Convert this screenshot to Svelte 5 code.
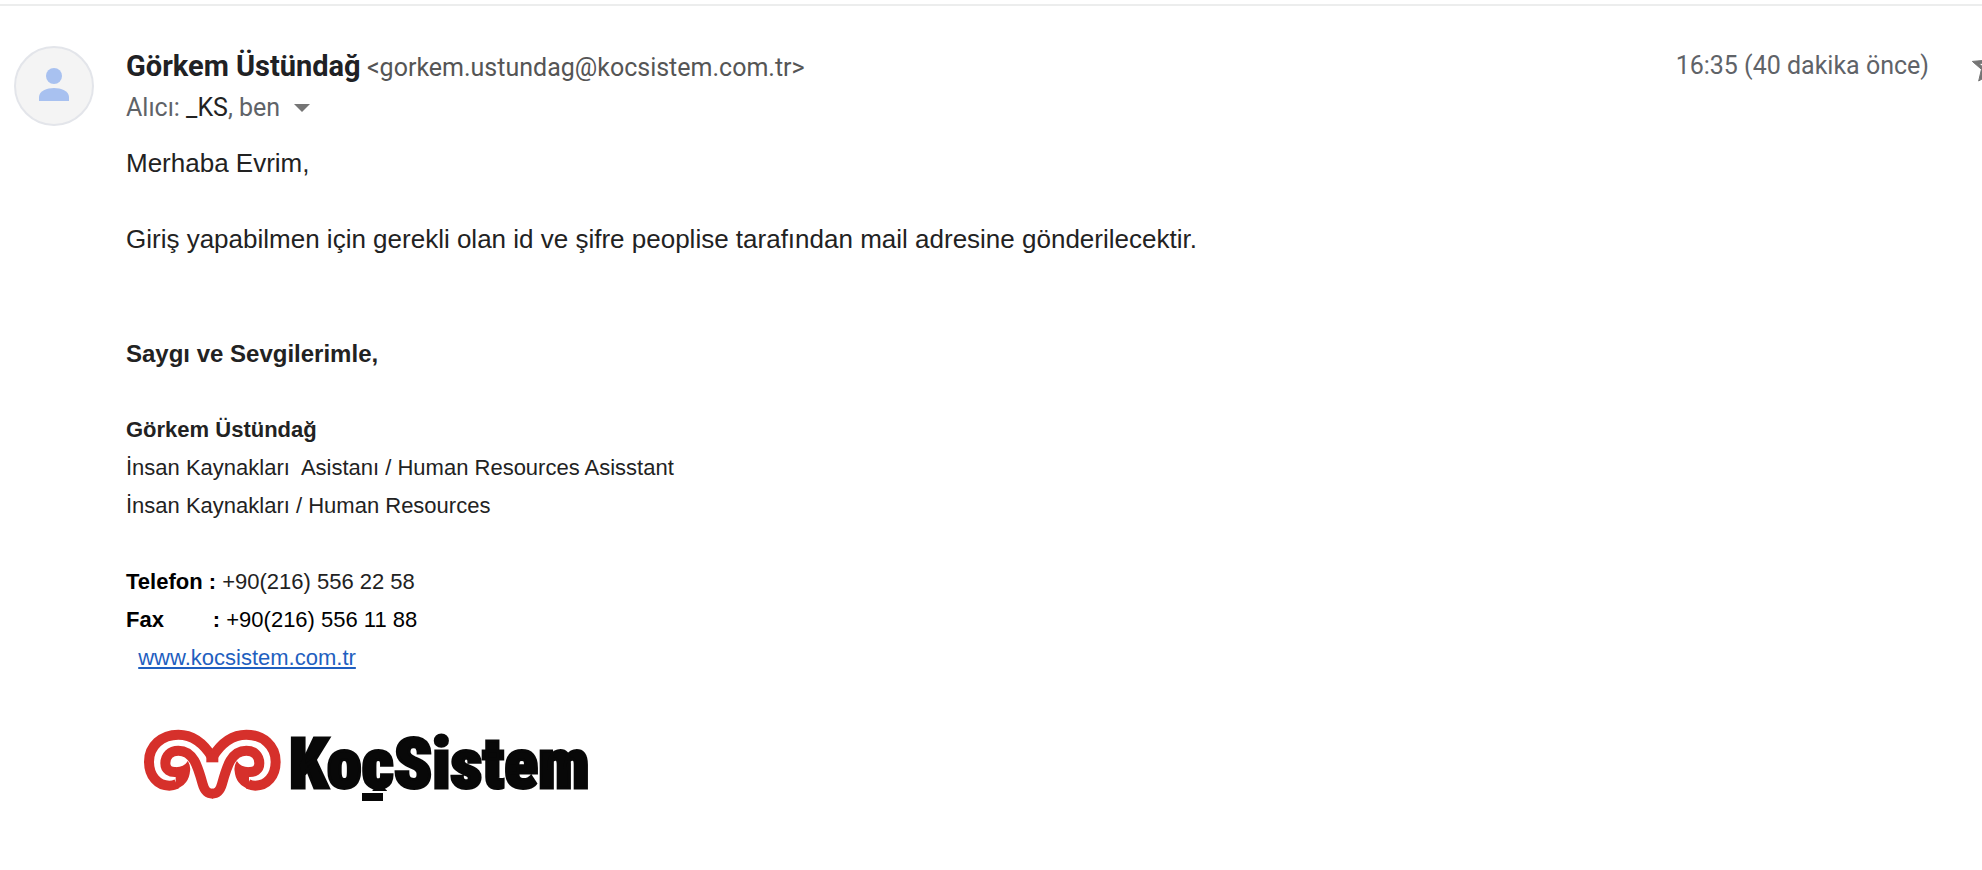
<script>
  const sender = 'Görkem Üstündağ';
  const horn =
    'M232 112C205 68 170 44 130 44C80 44 42 78 42 125C42 168 68 197 103 197Q114 197 125 192M233 221C215 221 208 210 203 192C188 138 175 92 130 92C106 92 91 108 91 130C91 150 106 158 125 156';
  const hook = 'M122 142Q150 140 158 123Q168 137 165 154Q162 194 122 208V174Z';
</script>

<article class="message">
  <header>
    <svg class="avatar" viewBox="0 0 80 80" aria-hidden="true">
      <circle cx="40" cy="40" r="39" fill="#f4f4f4" stroke="#e3e5ea" stroke-width="2" />
      <circle cx="40" cy="30" r="8" fill="#a8c1f0" />
      <path d="M25 55v-4c0-6 8-9 15-9s15 3 15 9v4z" fill="#a8c1f0" />
    </svg>
    <div class="who">
      <div class="from"><strong>{sender}</strong> <span class="email">&lt;gorkem.ustundag@kocsistem.com.tr&gt;</span></div>
      <div class="to">
        <span>Alıcı: <b>_KS</b>, ben</span>
        <button class="details" aria-label="Ayrıntıları göster">
          <svg width="16" height="8" viewBox="0 0 16 8"><path d="M0 0h16L8 8z" fill="#757575" /></svg>
        </button>
      </div>
    </div>
    <time>16:35 (40 dakika önce)</time>
    <button class="star" aria-label="Yıldız ekle">
      <svg width="40" height="40" viewBox="0 0 24 24"><path fill="#757575" stroke="#757575" stroke-width=".6" d="M22 9.24l-7.19-.62L12 2 9.19 8.63 2 9.24l5.46 4.73L5.82 21 12 17.27 18.18 21l-1.63-7.03L22 9.24zM12 15.4l-3.76 2.27 1-4.28-3.32-2.88 4.38-.38L12 6.1l1.71 4.04 4.38.38-3.32 2.88 1 4.28L12 15.4z" /></svg>
    </button>
  </header>

  <div class="body">
    <p>Merhaba Evrim,</p>
    <p class="after-line">Giriş yapabilmen için gerekli olan id ve şifre peoplise tarafından mail adresine gönderilecektir.</p>
    <p class="closing">Saygı ve Sevgilerimle,</p>
    <div class="signature">
      <p><b>{sender}</b></p>
      <p>İnsan Kaynakları&nbsp; Asistanı / Human Resources Asisstant</p>
      <p>İnsan Kaynakları / Human Resources</p>
      <p class="after-line"><b class="dark">Telefon :</b> +90(216) 556 22 58</p>
      <p class="dark"><b>Fax&nbsp;&nbsp;&nbsp;&nbsp;&nbsp;&nbsp;&nbsp; :</b> +90(216) 556 11 88</p>
      <p>&nbsp; <a href="http://www.kocsistem.com.tr">www.kocsistem.com.tr</a></p>
    </div>
    <svg class="logo" width="480" height="96" viewBox="0 0 480 96" role="img" aria-label="KoçSistem">
      <g transform="translate(9 0) scale(.3333)">
        <g fill="none" stroke="#d6302b" stroke-width="30">
          <path d={horn} />
          <path d={horn} transform="matrix(-1 0 0 1 464 0)" />
        </g>
        <g fill="#d6302b">
          <path d={hook} />
          <path d={hook} transform="matrix(-1 0 0 1 464 0)" />
          <path d="M214 100h36v27h-36z" />
        </g>
      </g>
      <text x="163" y="68">KoçSistem</text>
      <rect x="226" y="71" width="46" height="22" fill="#fff" />
      <rect x="236" y="73" width="21" height="8" fill="#080808" />
    </svg>
  </div>
</article>

<style>
  :global(body) { margin: 0; background: #fff; overflow-x: hidden; }
  .message {
    margin-top: 4px;
    border-top: 2px solid #eceded;
    padding-left: 14px;
    overflow: hidden;
    color: #222;
    font-family: "Liberation Sans", Arial, sans-serif;
  }
  header {
    display: flex;
    align-items: flex-start;
    padding-top: 40px;
    font-family: Roboto, sans-serif;
    font-size: 25px;
    line-height: 40px;
    color: #5f6368;
  }
  .avatar { width: 80px; height: 80px; flex: none; margin-right: 32px; }
  .who { flex: 1; }
  .from { color: #555; }
  .from strong { font-size: 29px; color: #202124; }
  .to { display: flex; align-items: center; gap: 14px; }
  .to b { font-weight: 400; color: #222; }
  button { border: 0; padding: 0; background: none; display: flex; }
  time { margin-right: 40px; }
  .star { margin: 0 -27px 0 0; flex: none; }
  .body { padding: 16px 16px 0 112px; font-size: 26px; line-height: 38px; }
  p { margin: 0; }
  .after-line { margin-top: 38px; }
  .closing { margin-top: 77px; font-size: 24px; font-weight: 700; }
  .signature { margin-top: 38px; font-size: 22px; }
  .dark { color: #000; }
  a { color: #1f5fc0; text-underline-offset: 2px; }
  .logo { display: block; margin-top: 43px; }
  .logo text {
    font: 900 70px "Liberation Sans Narrow", "Roboto Condensed", sans-serif;
    fill: #080808;
    stroke: #080808;
    stroke-width: 3px;
  }
</style>
